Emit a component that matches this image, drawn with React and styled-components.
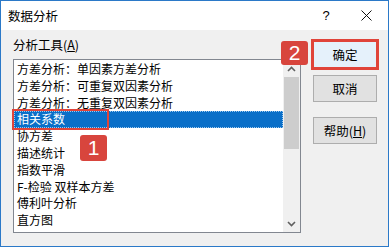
import React from "react";
import styled, { createGlobalStyle } from "styled-components";

const Global = createGlobalStyle`
  html, body { margin: 0; padding: 0; background: #f0f0f0; }
  body { font-family: "Noto Sans CJK SC", "Noto Sans", sans-serif; color: #000; }
`;

const Window = styled.div`
  position: relative;
  width: 389px;
  height: 247px;
  box-sizing: border-box;
  border: 1px solid #2b79c8;
  background: #f0f0f0;
  display: flex;
  flex-direction: column;
  overflow: hidden;
`;

const TitleBar = styled.div`
  height: 29px;
  background: #fff;
  display: flex;
  align-items: center;
  padding-left: 7px;
  font-size: 12.5px;
`;

const Title = styled.div`
  flex: 1;
  margin-top: -1px;
`;

const Help = styled.div`
  width: 20px;
  margin-right: 24px;
  font-family: "Liberation Sans", sans-serif;
  font-size: 13px;
  text-align: center;
`;

const Close = styled.div`
  width: 12px;
  height: 12px;
  margin-right: 16px;
  display: flex;
  align-items: center;
  justify-content: center;
`;

const Body = styled.div`
  flex: 1;
  display: flex;
  padding: 6px 11px 0 12px;
  gap: 12px;
`;

const LeftCol = styled.div`
  display: flex;
  flex-direction: column;
`;

const Label = styled.div`
  font-size: 12.5px;
  line-height: 18px;
  margin-bottom: 5px;
  u { text-decoration: underline; text-underline-offset: 1px; }
`;

const ListBox = styled.div`
  position: relative;
  width: 288px;
  height: 174px;
  box-sizing: border-box;
  border: 1px solid #828790;
  background: #fff;
  display: flex;
`;

const Items = styled.div`
  flex: 1;
  padding-top: 1px;
`;

const Item = styled.div`
  height: 16.8px;
  line-height: 16.8px;
  padding-left: 3px;
  font-size: 12px;
  white-space: nowrap;
  box-sizing: border-box;
  background: ${(p) => (p.selected ? "#0a6fc8" : "transparent")};
  color: ${(p) => (p.selected ? "#fff" : "#000")};
  outline: ${(p) => (p.selected ? "1px dotted #9cc8ee" : "none")};
  outline-offset: -1px;
`;

const ScrollBar = styled.div`
  width: 17px;
  background: #f0f0f0;
  display: flex;
  flex-direction: column;
  align-items: center;
`;

const Arrow = styled.div`
  height: 17px;
  width: 17px;
  display: flex;
  align-items: center;
  justify-content: center;
`;

const Thumb = styled.div`
  width: 15px;
  height: 72px;
  background: #cdcdcd;
`;

const Track = styled.div`
  flex: 1;
`;

const Highlight = styled.div`
  position: absolute;
  left: -2px;
  top: 49px;
  width: 97px;
  height: 21px;
  box-sizing: border-box;
  border: 2px solid #e0443a;
`;

const Badge = styled.div`
  position: absolute;
  left: ${(p) => p.x}px;
  top: ${(p) => p.y}px;
  width: 27px;
  height: ${(p) => p.h}px;
  border-radius: 3px;
  background: #d8453d;
  color: #fff;
  font-family: "Liberation Sans", sans-serif;
  font-size: 21px;
  display: flex;
  align-items: center;
  justify-content: center;
`;

const RightCol = styled.div`
  display: flex;
  flex-direction: column;
  padding-top: 5px;
`;

const Button = styled.div`
  width: 64px;
  height: 27px;
  box-sizing: border-box;
  margin-bottom: ${(p) => p.gap || 0}px;
  border: 1px solid ${(p) => (p.primary ? "#0078d7" : "#adadad")};
  background: ${(p) => (p.primary ? "#e5f1fb" : "#e1e1e1")};
  font-size: 12.5px;
  display: flex;
  align-items: center;
  justify-content: center;
  outline: ${(p) => (p.marked ? "3px solid #e0443a" : "none")};
  outline-offset: -1px;
  u { text-decoration: underline; text-underline-offset: 1px; }
`;

const items = [
  "方差分析：单因素方差分析",
  "方差分析：可重复双因素分析",
  "方差分析：无重复双因素分析",
  "相关系数",
  "协方差",
  "描述统计",
  "指数平滑",
  "F-检验 双样本方差",
  "傅利叶分析",
  "直方图",
];

const Chevron = ({ down }) => (
  <svg width="9" height="6" viewBox="0 0 9 6">
    <path
      d={down ? "M1 1 L4.5 4.5 L8 1" : "M1 5 L4.5 1.5 L8 5"}
      fill="none"
      stroke="#606060"
      strokeWidth="1.6"
    />
  </svg>
);

export default function App() {
  return (
    <>
      <Global />
      <Window>
        <TitleBar>
          <Title>数据分析</Title>
          <Help>?</Help>
          <Close>
            <svg width="11" height="11" viewBox="0 0 11 11">
              <path d="M0.5 0.5 L10.5 10.5 M10.5 0.5 L0.5 10.5" stroke="#111" strokeWidth="1" />
            </svg>
          </Close>
        </TitleBar>
        <Body>
          <LeftCol>
            <Label>
              分析工具(<u>A</u>)
            </Label>
            <ListBox>
              <Items>
                {items.map((t, i) => (
                  <Item key={t} selected={i === 3}>
                    {t}
                  </Item>
                ))}
              </Items>
              <ScrollBar>
                <Arrow>
                  <Chevron />
                </Arrow>
                <Thumb />
                <Track />
                <Arrow>
                  <Chevron down />
                </Arrow>
              </ScrollBar>
              <Highlight />
              <Badge x={66} y={75} h={26}>1</Badge>
            </ListBox>
          </LeftCol>
          <RightCol>
            <Button primary marked gap={7}>确定</Button>
            <Button gap={15}>取消</Button>
            <Button>
              帮助(<u>H</u>)
            </Button>
          </RightCol>
        </Body>
        <Badge x={280} y={40} h={24}>2</Badge>
      </Window>
    </>
  );
}
